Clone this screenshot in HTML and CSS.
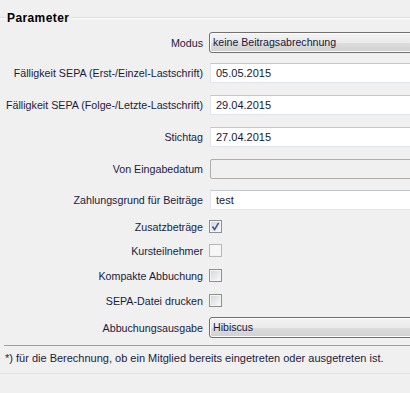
FILE: index.html
```html
<!DOCTYPE html>
<html>
<head>
    <meta charset="utf-8" />
    <title>Parameter</title>
    <link rel="stylesheet" href="styles.css">
</head>
<body>
    <div class="panel">
        <div class="legend">
            <span class="legend-line legend-start"></span>
            <span class="legend-text">Parameter</span>
            <span class="legend-line"></span>
        </div>

        <div class="form-grid">
            <label class="form-label">Modus</label>
            <div class="combo">keine Beitragsabrechnung</div>

            <label class="form-label">Fälligkeit SEPA (Erst-/Einzel-Lastschrift)</label>
            <div class="text-field">05.05.2015</div>

            <label class="form-label">Fälligkeit SEPA (Folge-/Letzte-Lastschrift)</label>
            <div class="text-field">29.04.2015</div>

            <label class="form-label">Stichtag</label>
            <div class="text-field">27.04.2015</div>

            <label class="form-label">Von Eingabedatum</label>
            <div class="text-field disabled"></div>

            <label class="form-label">Zahlungsgrund für Beiträge</label>
            <div class="text-field">test</div>

            <label class="form-label">Zusatzbeträge</label>
            <div class="check checked">
                <svg viewBox="0 0 13 13" width="13" height="13">
                    <path d="M3.5 6.5 L5.6 9.6 L9.6 2.8" fill="none" stroke="#3d55a0" stroke-width="1.6" />
                </svg>
            </div>

            <label class="form-label">Kursteilnehmer</label>
            <div class="check check-off"></div>

            <label class="form-label">Kompakte Abbuchung</label>
            <div class="check"></div>

            <label class="form-label">SEPA-Datei drucken</label>
            <div class="check"></div>

            <label class="form-label">Abbuchungsausgabe</label>
            <div class="combo">Hibiscus</div>
        </div>

        <div class="separator"></div>
        <p class="note">*) für die Berechnung, ob ein Mitglied bereits eingetreten oder ausgetreten ist.</p>
        <div class="note-line"></div>
    </div>
</body>
</html>
```

FILE: styles.css
```css
body {
    margin: 0;
    background-color: #f0f0f0;
    overflow: hidden;
    font-family: "Liberation Sans", Arial, sans-serif;
    color: #1b1b3c;
}

.panel {
    width: 410px;
    height: 393px;
    overflow: hidden;
}

.legend {
    display: flex;
    align-items: center;
    margin-top: 11px;
    height: 14px;
}

.legend-line {
    flex: 1;
    height: 0;
    border-top: 1px solid #d5dde4;
    border-bottom: 1px solid #ffffff;
}

.legend-start {
    flex: 0 0 6px;
}

.legend-text {
    font-size: 12px;
    font-weight: bold;
    letter-spacing: 0.4px;
    color: #000;
    padding: 0 2px 0 1px;
}

.form-grid {
    display: grid;
    grid-template-columns: 203px 1fr;
    grid-template-rows: 27px 33px 32px 32px 32px 30px 23px 25px 25px 25px 29px;
    column-gap: 6px;
    align-items: center;
    margin-top: 4px;
}

.form-label {
    font-size: 10.7px;
    text-align: right;
    white-space: nowrap;
}

.combo {
    box-sizing: border-box;
    width: 230px;
    height: 21px;
    line-height: 19px;
    padding-left: 3px;
    font-size: 10.6px;
    color: #16163c;
    border: 1px solid #707070;
    border-radius: 3px;
    background: linear-gradient(#f3f3f3 0%, #ebebeb 50%, #dddddd 50%, #d0d0d0 100%);
    box-shadow: inset 0 0 0 1px #fcfcfc;
}

.text-field {
    box-sizing: border-box;
    width: 230px;
    height: 20px;
    line-height: 18px;
    margin-left: 1px;
    padding-left: 5px;
    font-size: 11px;
    color: #16163c;
    background-color: #fff;
    border: 1px solid #e2e6ec;
    border-top-color: #c4c8ce;
}

.text-field.disabled {
    background-color: #f0f0f0;
    border: 1px solid #adadad;
    border-radius: 2px;
}

.check {
    position: relative;
    box-sizing: border-box;
    width: 13px;
    height: 13px;
    border: 1px solid #8e8f8f;
    background-color: #f4f4f4;
}

.check::before {
    content: "";
    position: absolute;
    left: 1px;
    top: 1px;
    right: 1px;
    bottom: 1px;
    background: linear-gradient(135deg, #d6d8dc, #f7f7f7);
}

.check svg {
    position: absolute;
    left: -1px;
    top: -1px;
}

.check-off {
    border-color: #b8b8b8;
}

.check-off::before {
    background: #f7f7f7;
}

.separator {
    margin: 3px 0 0 4px;
    border-top: 1px solid #a0a0a0;
}

.note {
    margin: 5px 0 0 5px;
    font-size: 11px;
    line-height: 14px;
    white-space: nowrap;
}

.note-line {
    margin-top: 8px;
    border-top: 1px solid #d6e2ec;
}
```
